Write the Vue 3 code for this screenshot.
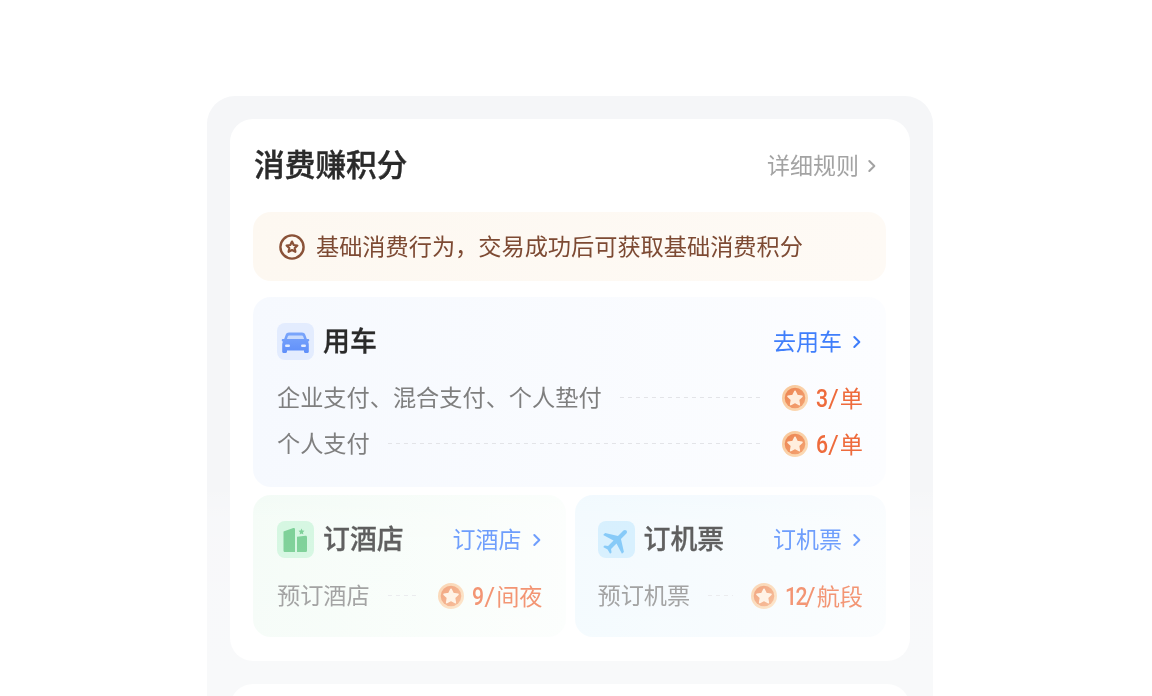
<script setup>
const rows = [
  { label: '企业支付、混合支付、个人垫付', num: '3', unit: '单' },
  { label: '个人支付', num: '6', unit: '单' },
]
const starPath = 'M12 5.6l1.9 3.9 4.3.6-3.1 3 .7 4.3L12 15.4l-3.800 2 .7-4.300-3.100-3 4.300-.6z'
const halves = [
  { key: 'hotel', title: '订酒店', link: '订酒店', label: '预订酒店', num: '9', unit: '间夜' },
  { key: 'plane', title: '订机票', link: '订机票', label: '预订机票', num: '12', unit: '航段' },
]
// The digits are condensed with a horizontal scale, so their layout box is trimmed to match.
const digitStyle = (num) => ({
  marginRight: `${-(num.length * 14.9 * 0.2)}px`,
  letterSpacing: num.length > 1 ? '-2px' : '0',
})
</script>

<template>
  <div class="page">
    <div class="panel">
      <section class="card">
        <header class="head">
          <h1 class="title">消费赚积分</h1>
          <div class="rules">
            <span class="lift">详细规则</span>
            <svg class="chev" viewBox="0 0 12 16"><path d="M2.500 2.500l5.500 5.500-5.500 5.500" /></svg>
          </div>
        </header>

        <div class="notice">
          <svg class="notice-icon" viewBox="0 0 26 26">
            <circle cx="13" cy="13" r="11.600" fill="none" stroke="#8a5238" stroke-width="2.400" />
            <path d="M13 7.600l1.700 3.400 3.700.5-2.700 2.600.7 3.700-3.400-1.800-3.400 1.800.7-3.700-2.700-2.600 3.700-.5z" fill="none" stroke="#8a5238" stroke-width="2.200" stroke-linejoin="round" />
          </svg>
          <span class="lift">基础消费行为，交易成功后可获取基础消费积分</span>
        </div>

        <div class="block car">
          <div class="block-head">
            <span class="icon icon-car">
              <svg viewBox="0 0 37 37">
                <defs>
                  <linearGradient id="carBody" x1="0" y1="0" x2="0" y2="1">
                    <stop offset="0" stop-color="#7ba6fb" />
                    <stop offset="1" stop-color="#5f8ffa" />
                  </linearGradient>
                  <linearGradient id="coinFill" x1="0" y1="0" x2="1" y2="1">
                    <stop offset="0" stop-color="#ec8350" />
                    <stop offset="1" stop-color="#f4a574" />
                  </linearGradient>
                  <linearGradient id="coinRing" x1="0" y1="0" x2="1" y2="1">
                    <stop offset="0" stop-color="#f8c596" />
                    <stop offset="1" stop-color="#fcdcb8" />
                  </linearGradient>
                </defs>
                <path d="M12 9.500h13c1.500 0 2.800.9 3.300 2.300l1.500 4.200h1.400c.6 0 1 .4 1 1v.6c0 .6-.4 1-1 1h-.4c.7.8 1 1.800 1 2.800v7.400c0 .7-.5 1.200-1.200 1.200h-2.400c-.7 0-1.200-.5-1.200-1.200v-1.300H10v1.300c0 .7-.5 1.200-1.200 1.200H6.400c-.7 0-1.200-.5-1.200-1.200v-7.400c0-1 .3-2 1-2.800h-.4c-.6 0-1-.4-1-1v-.6c0-.6.400-1 1-1h1.400l1.500-4.200c.5-1.400 1.800-2.300 3.300-2.300z" fill="url(#carBody)" />
                <path d="M12 12.400h13c.5 0 .9.300 1.100.8l1 2.900H9.900l1-2.900c.2-.5.6-.8 1.100-.8z" fill="#c9dbfd" />
                <rect x="8" y="21.500" width="5" height="2.400" rx="1.200" fill="#e3ecfe" />
                <rect x="24" y="21.500" width="5" height="2.400" rx="1.200" fill="#e3ecfe" />
              </svg>
            </span>
            <h2 class="block-title">用车</h2>
            <a class="link">
              <span class="lift">去用车</span>
              <svg class="chev blue" viewBox="0 0 12 16"><path d="M2.500 2.500l5.500 5.500-5.500 5.500" /></svg>
            </a>
          </div>
          <div class="rows">
            <div v-for="row in rows" :key="row.num" class="row">
              <span class="label">{{ row.label }}</span>
              <span class="dash"></span>
              <svg class="coin" viewBox="0 0 26 26">
                <circle cx="13" cy="13" r="13" fill="url(#coinRing)" />
                <circle cx="13" cy="13" r="10.300" fill="url(#coinFill)" />
                <path transform="translate(13 13.500) scale(1.12) translate(-12 -12)" :d="starPath" fill="#ffeedd" stroke="#ffeedd" stroke-width="1.500" stroke-linejoin="round" />
              </svg>
              <span class="points"><b :style="digitStyle(row.num)">{{ row.num }}</b><i>/</i>{{ row.unit }}</span>
            </div>
          </div>
        </div>

        <div class="halves">
          <div v-for="item in halves" :key="item.key" class="block half" :class="item.key">
            <div class="block-head">
              <span class="icon" :class="'icon-' + item.key">
                <svg v-if="item.key === 'hotel'" viewBox="0 0 37 37">
                  <path d="M6.500 10.500l9.800-3.500c.8-.3 1.700.3 1.700 1.200V31H8.100c-.9 0-1.600-.7-1.600-1.600z" fill="#55c278" />
                  <path d="M20 15.800l8.500-1c.9-.1 1.500.6 1.500 1.400v13.200c0 .9-.7 1.600-1.600 1.600H20z" fill="#55c278" />
                  <path d="M24.500 7.600l.9 1.900 2.100.3-1.500 1.500.3 2.100-1.800-1-1.800 1 .3-2.100-1.500-1.500 2.100-.3z" fill="#55c278" />
                </svg>
                <svg v-else viewBox="0 0 37 37">
                  <path transform="translate(18.500 19.500) rotate(45) scale(1.400) translate(-11.500 -12)" d="M21 16v-2l-8-5V3.500c0-.83-.67-1.500-1.500-1.500S10 2.670 10 3.500V9l-8 5v2l8-2.500V19l-2 1.500V22l3.500-1 3.500 1v-1.500L13 19v-5.500l8 2.500z" fill="#5fb9f6" />
                </svg>
              </span>
              <h2 class="block-title">{{ item.title }}</h2>
              <a class="link">
                <span class="lift">{{ item.link }}</span>
                <svg class="chev blue" viewBox="0 0 12 16"><path d="M2.500 2.500l5.500 5.500-5.500 5.500" /></svg>
              </a>
            </div>
            <div class="rows">
              <div class="row">
                <span class="label">{{ item.label }}</span>
                <span class="dash"></span>
                <svg class="coin" viewBox="0 0 26 26">
                  <circle cx="13" cy="13" r="13" fill="url(#coinRing)" />
                  <circle cx="13" cy="13" r="10.300" fill="url(#coinFill)" />
                  <path transform="translate(13 13.500) scale(1.12) translate(-12 -12)" :d="starPath" fill="#ffeedd" stroke="#ffeedd" stroke-width="1.500" stroke-linejoin="round" />
                </svg>
                <span class="points"><b :style="digitStyle(item.num)">{{ item.num }}</b><i>/</i>{{ item.unit }}</span>
              </div>
            </div>
          </div>
        </div>
      </section>

      <section class="card next"></section>
    </div>
    <div class="fade"></div>
  </div>
</template>

<style>
html, body { margin: 0; background: #fff; overflow: hidden; }
</style>

<style scoped>
.page {
  position: relative;
  width: 1152px;
  height: 696px;
  overflow: hidden;
  padding: 96px 0 0 207px;
  box-sizing: border-box;
  background: #fff;
  font-family: "Noto Sans CJK SC", "Noto Sans", sans-serif;
}
.panel {
  width: 726px;
  height: 800px;
  box-sizing: border-box;
  padding: 23px;
  background: #f5f6f8;
  border-radius: 28px 28px 0 0;
  display: flex;
  flex-direction: column;
  gap: 23px;
  filter: blur(0.35px);
}
.card {
  background: #fff;
  border-radius: 23px;
  padding: 0 24px 24px 23px;
  flex: none;
}
.next { height: 200px; padding: 0; }
.head {
  display: flex;
  align-items: center;
  justify-content: space-between;
  height: 93px;
  padding: 0 8px 0 1px;
  box-sizing: border-box;
}
.title {
  margin: 0 0 6px;
  font-size: 30.700px;
  line-height: 44px;
  font-weight: 500;
  color: #2a2a2a;
  -webkit-text-stroke: 0.4px #2a2a2a;
}
.lift { margin-bottom: 4px; }
.rules {
  display: flex;
  align-items: center;
  gap: 8px;
  font-size: 23px;
  line-height: 32px;
  color: #a3a3a3;
}
.chev { width: 11px; height: 16px; flex: none; }
.chev path { fill: none; stroke: #a3a3a3; stroke-width: 2.200; stroke-linecap: round; stroke-linejoin: round; }
.chev.blue path { stroke: #3f7efb; }
.notice {
  display: flex;
  align-items: center;
  gap: 11px;
  height: 69px;
  padding-left: 26px;
  border-radius: 18px;
  background: linear-gradient(to right, #fdf8f1, #fefaf5);
  font-size: 23.200px;
  color: #7d4a33;
  white-space: nowrap;
}
.notice-icon { width: 26px; height: 26px; flex: none; }
.block {
  border-radius: 18px;
  box-sizing: border-box;
}
.car {
  margin-top: 16px;
  height: 190px;
  padding: 26px 23px 0 24px;
  background: linear-gradient(to right, #f6f9fe, #fcfdff);
}
.block-head {
  display: flex;
  align-items: center;
  height: 37px;
}
.icon {
  width: 37px;
  height: 37px;
  border-radius: 8px;
  flex: none;
}
.icon svg { display: block; width: 37px; height: 37px; }
.icon-car { background: #e3ecfe; }
.icon-hotel { background: #c9f4d9; }
.icon-plane { background: #cbebfe; }
.block-title {
  margin: 0 0 4px 9px;
  font-size: 26.900px;
  line-height: 37px;
  font-weight: 500;
  color: #2a2a2a;
  -webkit-text-stroke: 0.3px #2a2a2a;
}
.link {
  margin-left: auto;
  display: flex;
  align-items: center;
  gap: 10px;
  font-size: 23px;
  line-height: 32px;
  color: #3f7efb;
  white-space: nowrap;
}
.rows {
  margin-top: 20px;
  display: flex;
  flex-direction: column;
  gap: 14px;
}
.row {
  display: flex;
  align-items: center;
  height: 32px;
  white-space: nowrap;
}
.label { font-size: 23.200px; color: #7f7f7f; }
.dash {
  flex: 1;
  margin: 3px 18px 0;
  height: 1.500px;
  background: repeating-linear-gradient(to right, #e3e4e8 0 4px, transparent 4px 8px);
}
.coin { width: 26px; height: 26px; flex: none; margin-top: 3px; }
.points {
  margin: 1px 0 0 8px;
  font-size: 23.200px;
  color: #ee6b3c;
}
.points b {
  display: inline-block;
  font-family: Roboto, sans-serif;
  font-weight: 500;
  font-size: 26.500px;
  line-height: 32px;
  transform: scaleX(0.8);
  transform-origin: left center;
}
.points i {
  font-family: Roboto, sans-serif;
  font-style: normal;
  font-size: 26.500px;
  margin-right: 1px;
}
.halves {
  margin-top: 8px;
  display: flex;
  gap: 9px;
}
.half {
  flex: 1;
  height: 142px;
  padding: 26px 23px 0 24px;
}
.hotel { background: linear-gradient(to right, #f2fbf5, #fbfefc); }
.plane { background: linear-gradient(to right, #f0f9fe, #f9fcfe); padding-left: 23px; }
.fade {
  position: absolute;
  inset: 0;
  pointer-events: none;
  background: linear-gradient(to bottom, rgba(255,255,255,0) 0, rgba(255,255,255,0) 484px, rgba(255,255,255,.24) 520px, rgba(255,255,255,.35) 696px);
}
</style>
